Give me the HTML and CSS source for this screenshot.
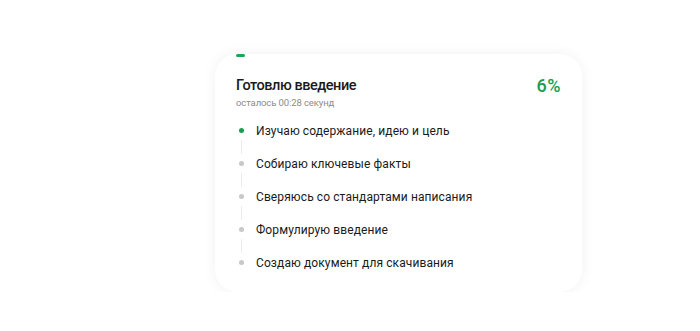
FILE: index.html
```html
<!DOCTYPE html>
<html lang="ru">
<head>
  <meta charset="UTF-8" />
  <meta name="viewport" content="width=device-width, initial-scale=1.0" />
  <title>Готовлю введение</title>
  <link rel="stylesheet" href="styles.css">
</head>
<body>
  <div class="progress-card">
    <div class="progress-bar"><div class="progress-fill" style="width: 9px"></div></div>
    <div class="card-header">
      <div>
        <div class="card-title">Готовлю введение</div>
        <div class="card-sub">осталось 00:28 секунд</div>
      </div>
      <div class="card-percent">6%</div>
    </div>
    <ul class="steps">
      <li class="step active"><span class="dot"></span>Изучаю содержание, идею и цель</li>
      <li class="step-line"></li>
      <li class="step"><span class="dot"></span>Собираю ключевые факты</li>
      <li class="step-line"></li>
      <li class="step"><span class="dot"></span>Сверяюсь со стандартами написания</li>
      <li class="step-line"></li>
      <li class="step"><span class="dot"></span>Формулирую введение</li>
      <li class="step-line"></li>
      <li class="step"><span class="dot"></span>Создаю документ для скачивания</li>
    </ul>
  </div>
</body>
</html>
```

FILE: styles.css
```css
body {
  margin: 0;
  padding: 54px 0 0 215px;
  font-family: Roboto, 'Noto Sans', sans-serif;
  background-color: #fff;
  color: #1a1a1a;
}
.progress-card {
  width: 367px;
  height: 238px;
  box-sizing: border-box;
  padding: 0 21px;
  background-color: #fff;
  border-radius: 22px;
  box-shadow: 0 0 14px rgba(0,0,0,0.06);
}
.progress-bar {
  height: 3px;
}
.progress-fill {
  height: 3px;
  border-radius: 2px;
  background-color: #1ea655;
}
.card-header {
  display: flex;
  justify-content: space-between;
  align-items: flex-start;
  margin-top: 19px;
}
.card-title {
  font-size: 14.5px;
  font-weight: 500;
  line-height: 20px;
  letter-spacing: -0.45px;
}
.card-sub {
  font-size: 9.5px;
  letter-spacing: -0.1px;
  color: #8c8c8c;
  margin-top: 1px;
}
.card-percent {
  font-size: 18px;
  font-weight: 500;
  letter-spacing: 0.5px;
  color: #1a9d50;
  line-height: 20px;
}
.steps {
  list-style: none;
  margin: 13px 0 0;
  padding: 0;
}
.step {
  display: flex;
  align-items: center;
  height: 19px;
  font-size: 12px;
  letter-spacing: 0.1px;
}
.dot {
  width: 5px;
  height: 5px;
  border-radius: 50%;
  background-color: #c8c8c8;
  margin: 0 12px 0 3px;
}
.step.active .dot {
  background-color: #1a9d50;
}
.step-line {
  width: 1px;
  height: 14px;
  margin-left: 5px;
  background-color: #ececec;
}
```
